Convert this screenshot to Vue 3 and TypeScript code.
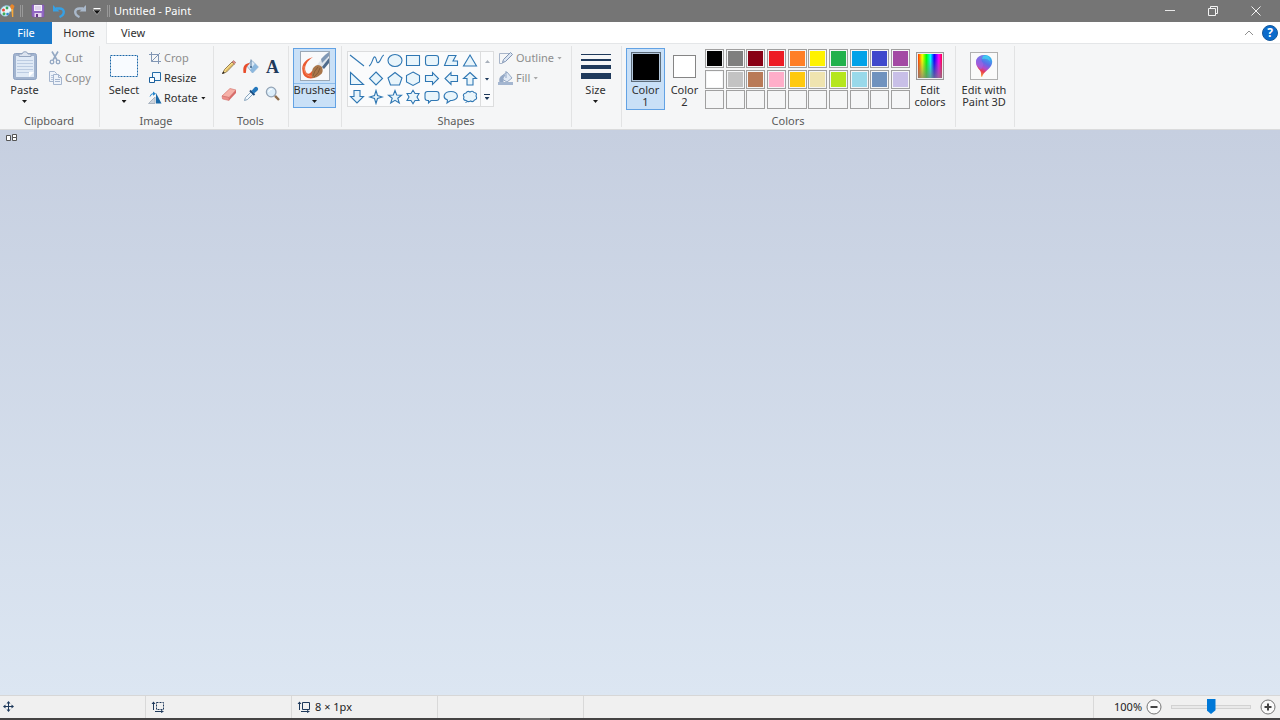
<script setup lang="ts">
import { ref } from 'vue'

interface Shape {
  name: string
  d: string
}

const shapes: Shape[] = [
  { name: 'Line', d: 'M1 2 L15 13' },
  { name: 'Curve', d: 'M1 13 C4 12 5 3 7 4 S8 12 11 9 S13 3 16 2' },
  { name: 'Oval', d: 'M1 7.5 A7 6 0 1 1 15 7.5 A7 6 0 1 1 1 7.5 Z' },
  { name: 'Rectangle', d: 'M1.5 2.5 H14.5 V12.5 H1.5 Z' },
  { name: 'Rounded rectangle', d: 'M4 2.5 H12 Q14.5 2.5 14.5 5 V10 Q14.5 12.5 12 12.5 H4 Q1.5 12.5 1.5 10 V5 Q1.5 2.5 4 2.5 Z' },
  { name: 'Polygon', d: 'M5.5 2.5 H13 L10 8 H14.5 V12.5 H1.5 Z' },
  { name: 'Triangle', d: 'M8 2 L14.5 13 H1.5 Z' },
  { name: 'Right triangle', d: 'M1.5 1.5 L14.5 13.5 H1.5 Z' },
  { name: 'Diamond', d: 'M8 1 L14.5 7.5 L8 14 L1.5 7.5 Z' },
  { name: 'Pentagon', d: 'M8 1.5 L15 7 L12.5 14 H3.5 L1 7 Z' },
  { name: 'Hexagon', d: 'M8 1 L14.5 4.5 V11 L8 14.5 L1.5 11 V4.5 Z' },
  { name: 'Right arrow', d: 'M1.5 4.5 H8.5 V1.5 L14.5 7.5 L8.5 13.5 V10.5 H1.5 Z' },
  { name: 'Left arrow', d: 'M14.5 4.5 H8 V1.5 L2 7.5 L8 13.5 V10.5 H14.5 Z' },
  { name: 'Up arrow', d: 'M8 1.5 L14.5 7.5 H11 V14 H5 V7.5 H1.5 Z' },
  { name: 'Down arrow', d: 'M5 1.5 H11 V7.5 H14.5 L8 14 L1.5 7.5 H5 Z' },
  { name: 'Four-point star', d: 'M8 1.5 L9.5 6.5 L14.5 8 L9.5 9.5 L8 14.5 L6.5 9.5 L1.5 8 L6.5 6.5 Z' },
  { name: 'Five-point star', d: 'M8 1.5 L9.7 6 L14.5 6.2 L10.8 9.2 L12.3 14 L8 11.3 L3.7 14 L5.2 9.2 L1.5 6.2 L6.3 6 Z' },
  { name: 'Six-point star', d: 'M8 1.2 L10 4.5 H14 L12 8 L14 11.5 H10 L8 14.8 L6 11.5 H2 L4 8 L2 4.5 H6 Z' },
  { name: 'Rounded callout', d: 'M3.5 2.5 H12.5 Q15 2.5 15 5 V9 Q15 11.5 12.5 11.5 H7 L4.5 14 V11.5 H3.5 Q1 11.5 1 9 V5 Q1 2.5 3.5 2.5 Z' },
  { name: 'Oval callout', d: 'M4.5 11 C-1 9 0.5 2.5 8 2.5 S17 10.5 9 11.5 L7.5 11.5 L4 14 Z' },
  { name: 'Cloud callout', d: 'M4 4 Q5.5 1.5 8 3 Q10.5 1.2 12 3.5 Q15.5 4 14 7 Q15.8 10 12.5 11 Q11 13.5 8.5 12 Q6 13.5 4 11.5 Q0.5 11 2 8 Q0 5 4 4 Z M3.5 13.5 h1' },
]

const palette: string[] = [
  '#000000', '#7f7f7f', '#880015', '#ed1c24', '#ff7f27', '#fff200', '#22b14c', '#00a2e8', '#3f48cc', '#a349a4',
  '#ffffff', '#c3c3c3', '#b97a57', '#ffaec9', '#ffc90e', '#efe4b0', '#b5e61d', '#99d9ea', '#7092be', '#c8bfe7',
  '', '', '', '', '', '', '', '', '', '',
]

const color1 = ref('#000000')
const color2 = ref('#ffffff')
const zoom = ref(50)

function pick(color: string): void {
  if (color) color1.value = color
}
</script>

<template>
  <div class="window">
    <header class="titlebar">
      <svg class="app-icon" width="16" height="18" viewBox="0 0 16 18">
        <path d="M0.5 9 C1 3 10 2 12 7 C13 10 9 9 9 11 C9 15.5 0.5 15 0.5 10 Z" fill="#e6f3fa" stroke="#8fc4de" />
        <circle cx="3.5" cy="8" r="1.5" fill="#e64d35" /><circle cx="7" cy="6" r="1.4" fill="#38a858" />
        <circle cx="4" cy="11.7" r="1.5" fill="#3fae5a" /><circle cx="7.5" cy="12" r="1.3" fill="#3187d0" />
        <path d="M10 4 L12 2 L14.5 4 L13.5 7 H11 Z" fill="#e8862b" /><path d="M11.3 7 H13.3 V15 H12 Z" fill="#f7a93c" />
      </svg>
      <span class="grip"></span>
      <button class="quick" aria-label="Save">
        <svg width="14" height="14" viewBox="0 0 14 14"><path d="M1 1 H13 V13 H2 L1 12 Z" fill="#9268c4" stroke="#7c50ae" stroke-width="0.6" /><path d="M3 1 H11 V7 H3 Z" fill="#f5effa" /><path d="M4 3 H10 M4 5 H10" stroke="#c9b8dc" /><path d="M3.5 9 H10.5 V13 H3.5 Z" fill="#e2d3ed" /><path d="M5 10 H7 V13 H5 Z" fill="#69378c" /></svg>
      </button>
      <button class="quick" aria-label="Undo">
        <svg width="14" height="14" viewBox="0 0 14 14"><path d="M4 4.5 H7 C13 4 13.5 10.5 7.5 13" fill="none" stroke="#37a0e4" stroke-width="2.4" /><path d="M1 1 V7.5 H7.5 Z" fill="#37a0e4" /></svg>
      </button>
      <button class="quick" aria-label="Redo">
        <svg width="14" height="14" viewBox="0 0 14 14"><path d="M10 4.5 H7 C1 4 0.5 10.5 6.5 13" fill="none" stroke="#a9b8ca" stroke-width="2.4" /><path d="M13 1 V7.5 H6.5 Z" fill="#a9b8ca" /></svg>
      </button>
      <button class="quick more" aria-label="Customize toolbar">
        <svg width="8" height="7" viewBox="0 0 8 7"><path d="M0.5 0.5 H7.5" stroke="#fff" /><path d="M0 2 H8 L4 6.5 Z" fill="#111" stroke="#ddd" stroke-width="0.6" /></svg>
      </button>
      <span class="grip"></span>
      <h1>Untitled - Paint</h1>
      <div class="window-buttons">
        <button aria-label="Minimize"><svg width="12" height="12" viewBox="0 0 12 12"><path d="M1 5.5 H11" stroke="#e8e8e8" /></svg></button>
        <button aria-label="Restore"><svg width="12" height="12" viewBox="0 0 12 12"><path d="M1.5 3.5 H8.5 V10.5 H1.5 Z M3.5 3.5 V1.5 H10.5 V8.5 H8.5" fill="none" stroke="#f2f2f2" /></svg></button>
        <button aria-label="Close"><svg width="12" height="12" viewBox="0 0 12 12"><path d="M1.5 1.5 L10.5 10.5 M10.5 1.5 L1.5 10.5" stroke="#f2f2f2" /></svg></button>
      </div>
    </header>

    <nav class="tabs">
      <button class="tab file">File</button>
      <button class="tab active">Home</button>
      <button class="tab view">View</button>
      <div class="tab-tools">
        <button aria-label="Collapse ribbon"><svg width="10" height="6" viewBox="0 0 10 6"><path d="M1 5 L5 1 L9 5" fill="none" stroke="#8f8f8f" /></svg></button>
        <button class="help" aria-label="Help">?</button>
      </div>
    </nav>

    <main class="ribbon">
      <section class="group clipboard">
        <div class="body">
          <button class="large">
            <span class="pic">
              <svg width="26" height="30" viewBox="0 0 26 30"><rect x="1.5" y="2.5" width="23" height="26" rx="2" fill="#a2b4cf" stroke="#8fa3c2" /><path d="M4 5 H22 V26 H4 Z" fill="#e0eaf6" /><path d="M5 9.5 H21 M5 12.5 H21 M5 15.5 H21 M5 18.5 H21 M5 21.5 H17" stroke="#bccce2" /><path d="M17 26 L22 21 H17 Z" fill="#fff" /><path d="M7 5.5 V3 H10 Q10.5 0.7 13 0.7 T16 3 H19 V5.5 Z" fill="#dce4ef" stroke="#94a5bf" /></svg>
            </span>
            <span>Paste</span><i class="arrow"></i>
          </button>
          <div class="small-list">
            <button class="small" disabled>
              <svg width="14" height="14" viewBox="0 0 14 14"><path d="M3 0.5 L8 9 M9 0.5 L4 9" stroke="#94a8c3" stroke-width="1.6" /><circle cx="3" cy="11" r="1.8" fill="none" stroke="#94a8c3" stroke-width="1.3" /><circle cx="9" cy="11" r="1.8" fill="none" stroke="#94a8c3" stroke-width="1.3" /></svg>
              <span>Cut</span>
            </button>
            <button class="small" disabled>
              <svg width="14" height="14" viewBox="0 0 14 14"><path d="M0.5 0.5 H5.5 L7.5 2.5 V10.5 H0.5 Z" fill="#eef3fa" stroke="#a4b5ce" /><path d="M2 4.5 H5 M2 6.5 H5 M2 8.5 H5" stroke="#b4c4dc" /><path d="M4.5 3.5 H9.5 L12.5 6.5 V13.5 H4.5 Z" fill="#eef3fa" stroke="#a4b5ce" /><path d="M9.5 3.5 V6.5 H12.5 M6 8.5 H11 M6 10.5 H11" fill="none" stroke="#a4b5ce" /></svg>
              <span>Copy</span>
            </button>
          </div>
        </div>
        <h2>Clipboard</h2>
      </section>

      <section class="group image">
        <div class="body">
          <button class="large">
            <span class="pic"><svg width="28" height="24" viewBox="0 0 28 24"><rect x="0.5" y="1.5" width="27" height="21" fill="#f8fbff" stroke="#1b66a8" stroke-dasharray="2 1" /></svg></span>
            <span>Select</span><i class="arrow"></i>
          </button>
          <div class="small-list">
            <button class="small" disabled>
              <svg width="14" height="14" viewBox="0 0 14 14"><path d="M3.5 1 V10.5 H13 M1 3.5 H10.5 V13 M3.5 10.5 L12 2" fill="none" stroke="#8297b5" /></svg>
              <span>Crop</span>
            </button>
            <button class="small">
              <svg width="14" height="14" viewBox="0 0 14 14"><path d="M4.5 1.5 H12.5 V9.5 H4.5 Z" fill="#eff8ff" stroke="#236ca8" /><path d="M1.5 6.5 H6.5 V11.5 H1.5 Z" fill="#fff" stroke="#1b5f9b" /></svg>
              <span>Resize</span>
            </button>
            <button class="small">
              <svg width="14" height="14" viewBox="0 0 14 14"><path d="M0.5 12.5 L7 6 V12.5 Z" fill="#ccd4de" stroke="#aab5c2" /><path d="M8 2 L13.5 12.5 H8 Z" fill="#1968a8" /><path d="M2 5.5 Q3 2 6.5 2.5" fill="none" stroke="#2585cb" /><path d="M5 0.5 L8 2.7 L5 4.8 Z" fill="#2585cb" /></svg>
              <span>Rotate</span><i class="arrow"></i>
            </button>
          </div>
        </div>
        <h2>Image</h2>
      </section>

      <section class="group tools">
        <div class="body tool-grid">
          <button aria-label="Pencil"><svg width="16" height="16" viewBox="0 0 16 16"><path d="M1.5 14.5 L3.5 10.5 L11 3 L13.3 5 L5.5 13 Z" fill="#f6dc8c" stroke="#7d6233" stroke-width="0.8" /><path d="M11 3 L12.5 1.5 L14.8 3.6 L13.3 5 Z" fill="#e08c86" stroke="#8d5a50" stroke-width="0.5" /><path d="M1 15 L2.2 12.4 L3.8 14 Z" fill="#222" /><path d="M4.8 12 L12.3 4.4" stroke="#d0a344" stroke-width="0.8" /></svg></button>
          <button aria-label="Fill with color"><svg width="16" height="16" viewBox="0 0 16 16"><path d="M3.5 6.5 L9 1.5 L15.3 8 L9.5 14 Z" fill="#d9e9f7" stroke="#86a9c9" stroke-width="0.8" /><path d="M9.5 14 L15.3 8 L12 4.6 L7 11 Z" fill="#8cb8de" /><path d="M8 0.5 V7.5" stroke="#5b7ea2" /><circle cx="8" cy="8" r="1.1" fill="#41688d" /><path d="M0.5 14 C-0.5 7 2 4 7 4.2 L4.8 6.5 C2.8 8.5 3.5 11 2.8 14 Z" fill="#e84d2b" /></svg></button>
          <button class="letter" aria-label="Text">A</button>
          <button aria-label="Eraser"><svg width="16" height="16" viewBox="0 0 16 16"><path d="M1 10 L9 2.5 L15 4 L8 11.5 Z" fill="#f6b1a8" stroke="#d77971" stroke-width="0.7" /><path d="M1 10 L8 11.5 V14.5 L1.5 13 Z" fill="#ee8d88" stroke="#c86a66" stroke-width="0.5" /><path d="M8 11.5 L15 4 V7 L8 14.5 Z" fill="#d76b68" /></svg></button>
          <button aria-label="Color picker"><svg width="16" height="16" viewBox="0 0 16 16"><path d="M1.5 14.5 L2.5 11.5 L8 6 L10 8 L4.5 13.5 Z" fill="#f1f8fe" stroke="#7c9bb6" stroke-width="0.9" /><path d="M7 4.5 L11.5 9" stroke="#1b4e82" stroke-width="2" /><path d="M8.5 5 L11 2 Q13 0 14.5 1.5 T14 5 L11 7.5 Z" fill="#2578bc" /></svg></button>
          <button aria-label="Magnifier"><svg width="16" height="16" viewBox="0 0 16 16"><path d="M10 9.8 L14 14" stroke="#8d6c4c" stroke-width="2.4" /><circle cx="6.2" cy="6" r="4.8" fill="#dceefb" stroke="#93a3b5" stroke-width="1.3" /><path d="M3.5 6 Q4 3.2 7 3.2" fill="none" stroke="#fff" /></svg></button>
        </div>
        <h2>Tools</h2>
      </section>

      <section class="group brushes">
        <div class="body">
          <button class="large selected brush-button">
            <span class="pic">
              <svg width="30" height="30" viewBox="0 0 30 30">
                <rect x="0.5" y="0.5" width="29" height="29" fill="#f8f9fb" stroke="#9ba8b6" />
                <path d="M13 6 C6 8 1 13 2.5 20 C3 26 8 28.5 14 27 L19 23 L12 20 C10 23 7 24 5.5 20 C4 15 7 10 13 6 Z" fill="#ea5a30" />
                <path d="M4 15 C4 22 7 26 13 25" fill="none" stroke="#f58a62" />
                <path d="M17 14 L23 6 L28.5 1 V12 L23 18 Z" fill="#dfe5ec" />
                <path d="M21 8 L25 4 L29 1 V5 L22 12 Z" fill="#8199b6" />
                <path d="M22 16 L29 7 V12 L24 18 Z" fill="#4f6b8c" />
                <path d="M12 27 Q11 19 14 16 Q18 12 22 16 Q24 22 20 24 Q17 27 12 27 Z" fill="#a9764a" />
                <path d="M13 25 Q14 20 18 16 M14 26 Q19 22 20 17" fill="none" stroke="#7d5634" stroke-width="0.8" />
              </svg>
            </span>
            <span>Brushes</span><i class="arrow"></i>
          </button>
        </div>
      </section>

      <section class="group shapes">
        <div class="body">
          <div class="gallery">
            <div class="shape-grid">
              <button v-for="shape in shapes" :key="shape.name" :aria-label="shape.name">
                <svg width="16" height="16" viewBox="0 0 16 16"><path :d="shape.d" :fill="shape.d.endsWith('Z') || shape.name === 'Cloud callout' ? '#e9f5fb' : 'none'" stroke="#2f77b3" stroke-width="1.1" /></svg>
              </button>
            </div>
            <div class="scroll">
              <button aria-label="Previous shapes" disabled><i class="arrow up"></i></button>
              <button aria-label="Next shapes"><i class="arrow"></i></button>
              <button class="expand" aria-label="All shapes"><i class="arrow"></i></button>
            </div>
          </div>
          <div class="small-list">
            <button class="small" disabled>
              <svg width="16" height="14" viewBox="0 0 16 14"><path d="M11 2.5 H1.5 V12.5 L4 12.5 L12.5 5" fill="none" stroke="#a8b5c9" /><path d="M4.5 11.5 L5.5 8.5 L12.5 1.5 L14.5 3.5 L7.5 10.5 Z" fill="#dce6f3" stroke="#8195b4" /></svg>
              <span>Outline</span><i class="arrow"></i>
            </button>
            <button class="small" disabled>
              <svg width="16" height="14" viewBox="0 0 16 14"><path d="M4 5 L9 1 L14 7 L9 11 L4 8 Z" fill="#dfe8f4" stroke="#96a9c4" /><path d="M2 11 C1 7 3 4 7 4 L5 7 V11 Z M8 0 V7" fill="#93a8c6" stroke="#93a8c6" /><path d="M0 11 H15 V14 H0 Z" fill="#a4b6d0" /></svg>
              <span>Fill</span><i class="arrow"></i>
            </button>
          </div>
        </div>
        <h2>Shapes</h2>
      </section>

      <section class="group size">
        <div class="body">
          <button class="large">
            <span class="pic"><svg width="30" height="28" viewBox="0 0 30 28"><path d="M0 2.5 H30" stroke="#1e395b" /><path d="M0 8 H30" stroke="#1e395b" stroke-width="2" /><path d="M0 15 H30" stroke="#1e395b" stroke-width="4" /><path d="M0 24 H30" stroke="#1e395b" stroke-width="6" /></svg></span>
            <span>Size</span><i class="arrow"></i>
          </button>
        </div>
      </section>

      <section class="group colors">
        <div class="body">
          <button class="large selected color-button">
            <span class="pic"><span class="swatch first" :style="{ backgroundColor: color1 }"></span></span>
            <span>Color<br>1</span>
          </button>
          <button class="large color-button">
            <span class="pic"><span class="swatch" :style="{ backgroundColor: color2 }"></span></span>
            <span>Color<br>2</span>
          </button>
          <div class="palette">
            <button v-for="(color, index) in palette" :key="index" :aria-label="color || 'Empty color'" :style="{ backgroundColor: color || 'transparent' }" @click="pick(color)"></button>
          </div>
          <button class="large edit-colors">
            <span class="pic"><span class="spectrum"></span></span>
            <span>Edit<br>colors</span>
          </button>
        </div>
        <h2>Colors</h2>
      </section>

      <section class="group paint3d">
        <div class="body">
          <button class="large">
            <span class="pic">
              <svg width="28" height="28" viewBox="0 0 28 28">
                <defs>
                  <linearGradient id="drop" x1="0.8" y1="0" x2="0.4" y2="1"><stop offset="0" stop-color="#28caef" /><stop offset="0.4" stop-color="#5c6ee8" /><stop offset="0.62" stop-color="#b24bcb" /><stop offset="0.78" stop-color="#e93950" /><stop offset="1" stop-color="#f6a43b" /></linearGradient>
                </defs>
                <rect x="0.5" y="0.5" width="27" height="27" fill="#fafafa" stroke="#b0b0b0" />
                <path d="M14 3 C20 2 24 8 21.5 13 C19 18 14 19 12 25 C11 25 11 24 11 21 C11 18 6 16 6 10 C6 6 10 3 14 3 Z" fill="url(#drop)" />
                <path d="M6 10 C6 5 11 2.5 15 3 C11 5 10.5 8 13 11 C14 13 12 15 11 18 C9 15.5 6 14 6 10 Z" fill="#9d65e5" opacity="0.6" />
                <path d="M13 4 Q20 3 20 9 Q17 6 12 7 Z" fill="#45d4f1" opacity="0.7" />
              </svg>
            </span>
            <span>Edit with<br>Paint 3D</span>
          </button>
        </div>
      </section>
    </main>

    <section class="workspace" aria-label="Canvas">
      <svg width="12" height="8" viewBox="0 0 12 8"><path d="M0.5 1.5 H4.5 V6.5 H0.5 Z M6.5 0.5 H10.5 V3.5 H6.5 Z M6.5 3.5 H10.5 V6.5 H6.5 Z" fill="#fff" stroke="#555" /></svg>
    </section>

    <footer class="status">
      <div class="cell"><svg width="12" height="12" viewBox="0 0 12 12"><path d="M5.5 1 V10 M1 5.5 H10" stroke="#1e395b" /><path d="M3.5 2.5 L5.5 0 L7.5 2.5 Z M3.5 8.5 L5.5 11 L7.5 8.5 Z M2.5 3.5 L0 5.5 L2.5 7.5 Z M8.5 3.5 L11 5.5 L8.5 7.5 Z" fill="#1e395b" /></svg></div>
      <div class="cell"><svg width="14" height="12" viewBox="0 0 14 12"><path d="M2.5 1 V9" stroke="#1e395b" /><path d="M0.5 3 L2.5 0.5 L4.5 3 Z M10 9 L13 10.5 L10 12 Z" fill="#1e395b" /><path d="M4 10.5 H12" stroke="#1e395b" /><path d="M5.5 1.5 H12.5 V8.5 H5.5 Z" fill="none" stroke="#1e395b" stroke-dasharray="2 1" /></svg></div>
      <div class="cell"><svg width="14" height="12" viewBox="0 0 14 12"><path d="M2.5 1 V9" stroke="#1e395b" /><path d="M0.5 3 L2.5 0.5 L4.5 3 Z M10 9 L13 10.5 L10 12 Z" fill="#1e395b" /><path d="M4 10.5 H12" stroke="#1e395b" /><path d="M5.5 1.5 H12.5 V8.5 H5.5 Z" fill="none" stroke="#1e395b" /></svg><span>8 × 1px</span></div>
      <div class="cell"></div>
      <div class="cell wide"></div>
      <div class="zoom">
        <label for="zoom">100%</label>
        <button aria-label="Zoom out"><svg width="16" height="16" viewBox="0 0 16 16"><circle cx="8" cy="8" r="7" fill="#fafafa" stroke="#767676" /><path d="M4.5 8 H11.5" stroke="#444" stroke-width="2" /></svg></button>
        <input id="zoom" v-model="zoom" type="range" min="0" max="100">
        <button aria-label="Zoom in"><svg width="16" height="16" viewBox="0 0 16 16"><circle cx="8" cy="8" r="7" fill="#fafafa" stroke="#767676" /><path d="M4.5 8 H11.5 M8 4.5 V11.5" stroke="#444" stroke-width="2" /></svg></button>
      </div>
    </footer>
    <div class="edge"><span></span></div>
  </div>
</template>

<style>
body {
  margin: 0;
}
</style>

<style scoped>
.window {
  display: flex;
  flex-direction: column;
  min-height: 100vh;
  overflow: hidden;
  color: #303030;
  font: 11px/12px "Noto Sans", "Open Sans", sans-serif;
}
.window * { box-sizing: border-box; }
button {
  margin: 0;
  padding: 0;
  border: 0;
  background: none;
  color: inherit;
  font: inherit;
}
svg { display: block; flex: none; }
h1, h2 { margin: 0; font: inherit; }

.titlebar {
  display: flex;
  align-items: center;
  height: 22px;
  background: #757575;
  color: #fff;
}
.grip { width: 3px; height: 12px; margin: 0 4px; border: 1px solid #999; border-width: 0 1px; }
.quick { display: grid; place-items: center; width: 21px; height: 22px; }
.more { width: 13px; }
.titlebar h1 { margin-left: 0; }
.window-buttons { display: flex; margin-left: auto; }
.window-buttons button { display: grid; place-items: center; width: 43px; height: 20px; }
.window-buttons button:last-child { width: 46px; padding-right: 2px; }

.tabs { display: flex; height: 22px; background: #fff; border-bottom: 1px solid #e4e6e8; }
.tab { width: 54px; height: 22px; }
.file { width: 52px; background: #1979ca; color: #fff; }
.active { background: #f5f6f7; border-right: 1px solid #e4e6e8; width: 55px; }
.view { width: 52px; }
.tab-tools { display: flex; align-items: center; gap: 8px; margin-left: auto; padding-right: 2px; }
.help {
  width: 16px;
  height: 16px;
  border: 1px solid #16599a;
  border-radius: 50%;
  background: #0b6bcb;
  color: #fff;
  font-weight: bold;
  font-size: 12px;
}

.ribbon { display: flex; height: 86px; background: #f5f6f7; border-bottom: 1px solid #dadbdc; }
.group { display: flex; flex-direction: column; padding-top: 4px; position: relative; }
.group::after {
  content: "";
  position: absolute;
  top: 2px;
  right: 0;
  bottom: 2px;
  border-right: 1px solid #e2e3e4;
}
.body { display: flex; height: 66px; }
.group h2 { padding-right: 2px; color: #5a5a5a; text-align: center; line-height: 14px; }
.large { display: flex; flex-direction: column; align-items: center; height: 62px; }
.pic { display: grid; place-items: center; height: 36px; flex: none; }
.arrow {
  width: 5px;
  height: 3px;
  background: #1b1b1b;
  clip-path: polygon(0 0, 100% 0, 50% 100%);
}
.large .arrow { margin-top: 4px; }
.up { transform: rotate(180deg); }
.small-list { display: flex; flex-direction: column; }
.small { display: flex; align-items: center; gap: 2px; height: 20px; }
.small .arrow { margin-left: 1px; }
.small:disabled { color: #8d8d8d; }
button:disabled .arrow { background: #a8a8a8; }

.clipboard { width: 100px; }
.clipboard .large { width: 49px; }
.image { width: 114px; }
.image .large { width: 48px; }
.tools { width: 75px; }
.tool-grid { display: grid; grid-template-columns: repeat(3, 22px); grid-template-rows: 27px 27px; padding: 5px 2px 0 0; justify-content: center; }
.tool-grid button { display: grid; place-items: center; }
.tool-grid .letter { color: #1e395b; font: bold 18px/20px "Liberation Serif", serif; }
.brushes { width: 53px; }
.brushes .body { padding-left: 4px; }
.selected { background: #c9e0f7; border: 1px solid #62a2e4; }
.brush-button { width: 43px; height: 60px; }
.brush-button .pic { width: 100%; height: 35px; border-bottom: 1px solid #8ebce9; }

.shapes { width: 230px; }
.shapes .body { padding-left: 5px; gap: 4px; }
.gallery { display: flex; width: 147px; height: 56px; margin-top: 3px; border: 1px solid #dcddde; background: #fafbfc; }
.shape-grid { display: grid; flex: 1; grid-template-columns: repeat(7, 1fr); grid-template-rows: repeat(3, 1fr); padding-right: 1px; }
.shape-grid button { display: grid; place-items: center; min-width: 0; min-height: 0; }
.scroll { display: flex; flex-direction: column; width: 13px; border-left: 1px solid #dcddde; }
.scroll button { display: flex; flex: 1; flex-direction: column; align-items: center; justify-content: center; }
.scroll .arrow { background: #1e395b; }
.scroll button:disabled .arrow { background: #a8b0bb; }
.expand::before { content: ""; width: 6px; margin-bottom: 2px; border-top: 1px solid #1e395b; }

.size { width: 50px; }
.size .large { width: 47px; }
.colors { width: 334px; }
.colors .body { padding-left: 4px; }
.color-button { width: 39px; }
.color-button.selected .pic { height: 35px; }
.swatch { width: 23px; height: 23px; border: 1px solid #858585; }
.first { width: 30px; height: 30px; border-color: #5c6c7b; box-shadow: inset 0 0 0 1px #b3c7dc; }
.palette {
  display: grid;
  width: 205px;
  height: 60px;
  margin: 1px 0 0 1px;
  grid-template-columns: repeat(10, 19px);
  grid-template-rows: repeat(3, 19px);
  place-content: space-between;
}
.palette button { border: 1px solid #a0a0a0; box-shadow: inset 0 0 0 1px #f5f6f7; }
.edit-colors { width: 40px; }
.spectrum {
  width: 28px;
  height: 28px;
  border: 1px solid #999;
  box-shadow: inset 0 0 0 1px #eee;
  background: linear-gradient(to bottom, transparent 20%, #808080cc), linear-gradient(to right, #f00, #ff0 20%, #0f0 36%, #0ff 52%, #00f 66%, #f0f 84%, #f00);
}
.paint3d { width: 59px; }
.paint3d .large { width: 56px; }

.workspace { flex: 1; padding: 4px 6px; background: linear-gradient(#c6cfe0, #dce6f2); }
.status { display: flex; height: 23px; border-top: 1px solid #d7d7d7; background: #f0f0f0; color: #222; }
.cell { display: flex; align-items: center; gap: 4px; width: 146px; padding-left: 3px; border-right: 1px solid #d9d9d9; }
.cell + .cell { padding-left: 5px; }
.cell.wide { flex: 1; }
.zoom { display: flex; align-items: center; width: 186px; padding-left: 20px; padding-right: 3px; }
.zoom label { width: 32px; }
.zoom input { width: 80px; height: 16px; margin: 0 9px; appearance: none; background: transparent; }
.zoom input::-webkit-slider-runnable-track { height: 4px; border: 1px solid #d2d2d2; background: #e9e9e9; }
.zoom input::-webkit-slider-thumb {
  width: 9px;
  height: 15px;
  margin-top: -7px;
  appearance: none;
  background: #0078d7;
  clip-path: polygon(0 0, 100% 0, 100% 75%, 50% 100%, 0 75%);
}
.edge { display: flex; justify-content: center; height: 2px; background: #454344; }
.edge span { width: 30px; margin-right: 210px; background: #6b6b6b; }
</style>
